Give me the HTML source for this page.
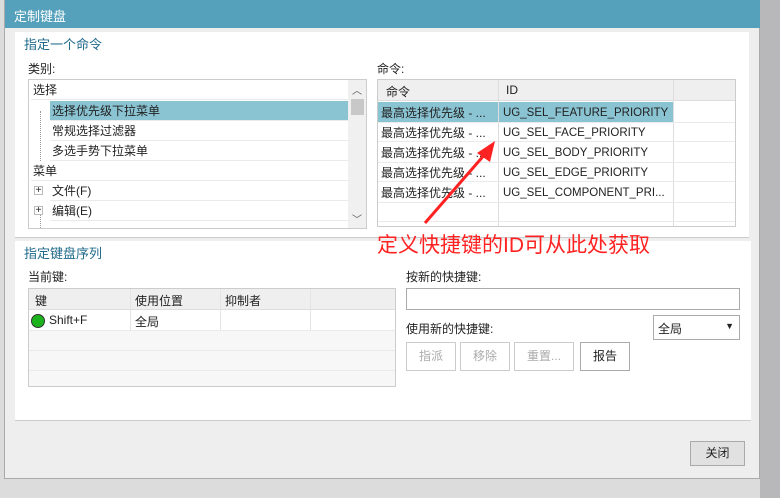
<!DOCTYPE html><html><head><meta charset="utf-8"><style>
*{margin:0;padding:0;box-sizing:border-box}
body{width:780px;height:498px;background:#dcdcdc;font-family:"Liberation Sans","Noto Sans CJK SC",sans-serif;font-size:12px;color:#222;position:relative;overflow:hidden}
.a{position:absolute}
.tl{background:#b8b8ba;left:760px;top:0;width:20px;height:498px}
.win{left:4px;top:0;width:756px;height:479px;background:#eeeeee;border:1px solid #aaa;border-top:none}
.title{left:5px;top:0;width:755px;height:28px;background:#55a0ba;color:#fff;font-size:13px;padding:6px 9px}
.panel{background:#fff;border-bottom:1px solid #ccc}
.h{color:#1f6a8a;font-size:13px}
.box{border:1px solid #ccc;background:#fff;overflow:hidden}
.row{position:absolute;height:20px;line-height:20px;border-bottom:1px solid #eaeaea;white-space:nowrap}
.btn{position:absolute;border:1px solid #ccc;background:#fff;color:#aaa;text-align:center;line-height:26px;font-size:12px}
</style></head><body>
<div class="a tl"></div>
<div class="a win"></div>
<div class="a title">定制键盘</div>
<div class="a panel" style="left:15px;top:32px;width:734px;height:206px"></div>
<div class="a h" style="left:24px;top:34px">指定一个命令</div>
<div class="a" style="left:28px;top:60px">类别:</div>
<div class="a box" style="left:28px;top:79px;width:339px;height:150px">
 <div class="row" style="left:2px;top:0;width:318px;padding-left:2px">选择</div>
 <div class="row" style="left:21px;top:21px;width:299px;background:#8ac3d2;padding-left:2px">选择优先级下拉菜单</div>
 <div class="row" style="left:21px;top:41px;width:299px;padding-left:2px">常规选择过滤器</div>
 <div class="row" style="left:21px;top:61px;width:299px;padding-left:2px">多选手势下拉菜单</div>
 <div class="row" style="left:2px;top:81px;width:318px;padding-left:2px">菜单</div>
 <div class="row" style="left:21px;top:101px;width:299px;padding-left:2px">文件(F)</div>
 <div class="row" style="left:21px;top:121px;width:299px;padding-left:2px">编辑(E)</div>
 <div class="a" style="left:5px;top:106px;width:9px;height:9px;border:1px solid #bbb;font-size:10px;line-height:7px;text-align:center">+</div>
 <div class="a" style="left:5px;top:126px;width:9px;height:9px;border:1px solid #bbb;font-size:10px;line-height:7px;text-align:center">+</div>
 <div class="a" style="left:11px;top:31px;width:1px;height:50px;border-left:1px dotted #999"></div>
 <div class="a" style="left:11px;top:135px;width:1px;height:15px;border-left:1px dotted #999"></div>
 <div class="a" style="left:319px;top:0;width:19px;height:148px;background:#f0f0f0"></div>
 <div class="a" style="left:322px;top:19px;width:13px;height:16px;background:#c8c8c8"></div>
 <div class="a" style="left:323px;top:2px;font-size:10px;color:#555">︿</div>
 <div class="a" style="left:323px;top:131px;font-size:10px;color:#555">﹀</div>
</div>
<div class="a" style="left:377px;top:60px">命令:</div>
<div class="a box" style="left:377px;top:79px;width:359px;height:148px">
 <div class="a" style="left:0;top:0;width:357px;height:21px;background:#efefef;border-bottom:1px solid #ddd"></div>
 <div class="a" style="left:8px;top:3px">命令</div><div class="a" style="left:128px;top:3px">ID</div>
 <div class="a" style="left:0;top:22px;width:295px;height:20px;background:#8ac3d2"></div>
 <div class="a" style="left:120px;top:0;width:1px;height:148px;background:#ddd"></div>
 <div class="a" style="left:295px;top:0;width:1px;height:148px;background:#ddd"></div>
 <div class="a" style="left:3px;top:23px;line-height:20px">最高选择优先级 - ...<br>最高选择优先级 - ...<br>最高选择优先级 - ...<br>最高选择优先级 - ...<br>最高选择优先级 - ...</div>
 <div class="a" style="left:125px;top:23px;line-height:20px;font-size:11.5px">UG_SEL_FEATURE_PRIORITY<br>UG_SEL_FACE_PRIORITY<br>UG_SEL_BODY_PRIORITY<br>UG_SEL_EDGE_PRIORITY<br>UG_SEL_COMPONENT_PRI...</div>
 <div class="a" style="left:0;top:42px;width:357px;border-top:1px solid #eaeaea;height:20px;border-bottom:1px solid #eaeaea"></div>
 <div class="a" style="left:0;top:82px;width:357px;border-top:1px solid #eaeaea;height:20px;border-bottom:1px solid #eaeaea"></div>
 <div class="a" style="left:0;top:122px;width:357px;border-top:1px solid #eaeaea;height:20px;border-bottom:1px solid #eaeaea"></div>
</div>
<div class="a panel" style="left:15px;top:241px;width:736px;height:180px"></div>
<div class="a h" style="left:24px;top:243px">指定键盘序列</div>
<svg class="a" style="left:420px;top:135px" width="85" height="95"><path d="M5 88 L66 18" stroke="#f22" stroke-width="3"/><path d="M75 6 L57 18 L70 27 Z" fill="#f22"/></svg>
<div class="a" style="left:377px;top:229px;color:#f22;font-size:21px">定义快捷键的ID可从此处获取</div>
<div class="a" style="left:28px;top:268px">当前键:</div>
<div class="a box" style="left:28px;top:288px;width:368px;height:99px">
 <div class="a" style="left:0;top:0;width:366px;height:21px;background:#efefef;border-bottom:1px solid #ddd"></div>
 <div class="a" style="left:6px;top:3px">键</div><div class="a" style="left:106px;top:3px">使用位置</div><div class="a" style="left:196px;top:3px">抑制者</div>
 <div class="a" style="left:101px;top:0;width:1px;height:99px;background:#e4e4e4"></div>
 <div class="a" style="left:191px;top:0;width:1px;height:99px;background:#e4e4e4"></div>
 <div class="a" style="left:281px;top:0;width:1px;height:99px;background:#e4e4e4"></div>
 <div class="a" style="left:2px;top:25px;width:14px;height:14px;border-radius:50%;background:#1db31d;border:1px solid #333"></div>
 <div class="a" style="left:20px;top:24px">Shift+F</div><div class="a" style="left:106px;top:24px">全局</div>
 <div class="a" style="left:0;top:41px;width:366px;height:60px;background:#f7f7f7;border-top:1px solid #eaeaea"></div>
 <div class="a" style="left:0;top:61px;width:366px;border-top:1px solid #eaeaea"></div>
 <div class="a" style="left:0;top:81px;width:366px;border-top:1px solid #eaeaea"></div>
</div>
<div class="a" style="left:406px;top:268px">按新的快捷键:</div>
<div class="a" style="left:406px;top:288px;width:334px;height:22px;border:1px solid #aaa;background:#fff"></div>
<div class="a" style="left:406px;top:320px">使用新的快捷键:</div>
<div class="a" style="left:653px;top:315px;width:87px;height:25px;border:1px solid #aaa;background:#fff;padding:4px 4px">全局<span style="position:absolute;right:5px;top:5px;font-size:9px">▼</span></div>
<div class="btn" style="left:406px;top:342px;width:50px;height:29px">指派</div>
<div class="btn" style="left:460px;top:342px;width:50px;height:29px">移除</div>
<div class="btn" style="left:514px;top:342px;width:60px;height:29px">重置...</div>
<div class="btn" style="left:580px;top:342px;width:50px;height:29px;border-color:#aaa;color:#222">报告</div>
<div class="btn" style="left:690px;top:441px;width:55px;height:25px;background:#e1e1e1;border-color:#aaa;color:#222;line-height:23px">关闭</div>
</body></html>
